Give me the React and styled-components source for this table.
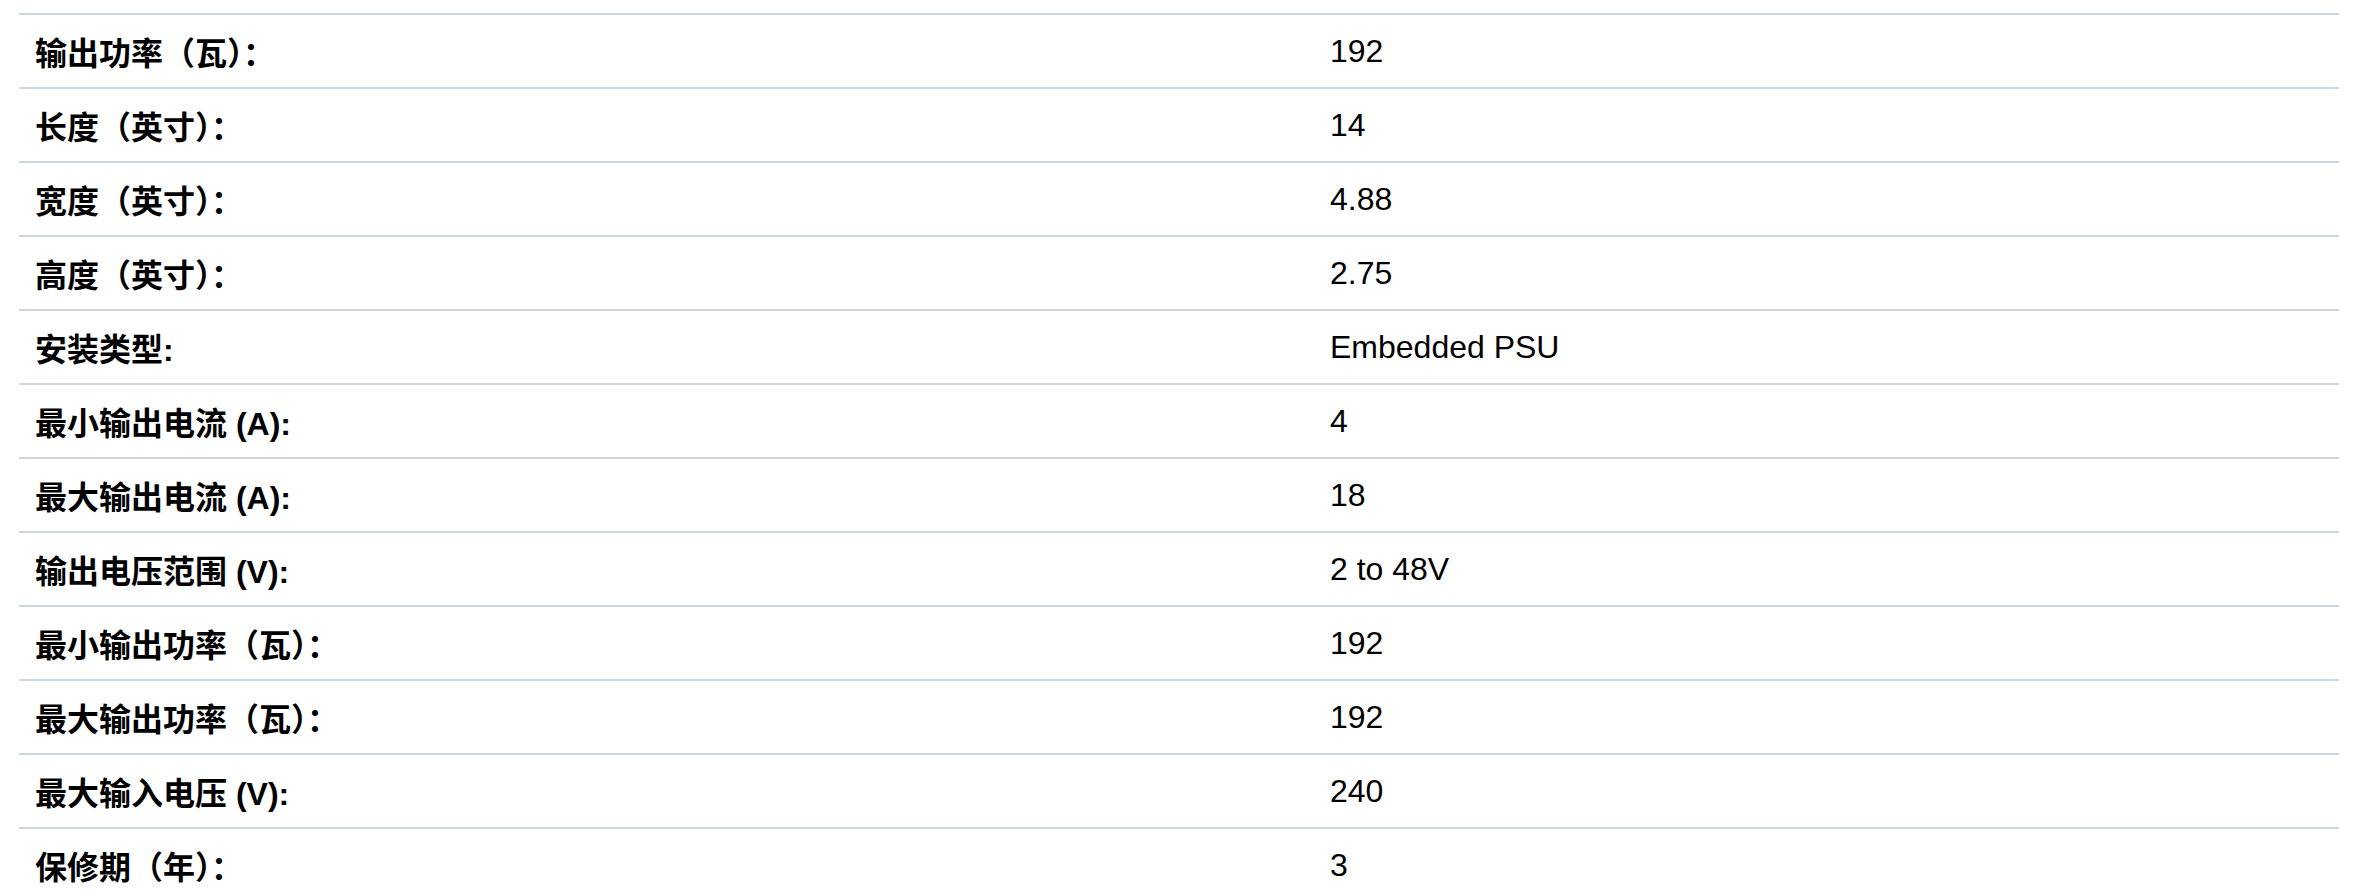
import React from 'react';
import styled, { createGlobalStyle } from 'styled-components';

const GlobalStyle = createGlobalStyle`
  body {
    margin: 0;
    background: #ffffff;
    font-family: "Liberation Sans", "Noto Sans CJK SC", sans-serif;
    color: #000;
  }
`;

const Page = styled.div`
  padding: 13px 34px 0 19px;
`;

const SpecTable = styled.div`
  display: flex;
  flex-direction: column;
`;

const Row = styled.div`
  display: grid;
  grid-template-columns: 1296px 1fr;
  border-top: 2px solid #cdd7e2;
  height: 72px;
  align-items: center;
`;

const Label = styled.div`
  padding-left: 16px;
  font-weight: bold;
  font-size: 32px;
  font-family: "Liberation Sans", "Noto Sans CJK SC", sans-serif;
  color: #000;
`;

const Value = styled.div`
  padding-left: 15px;
  font-size: 32px;
  color: #000;
`;

const specs = [
  ['输出功率（瓦）：', '192'],
  ['长度（英寸）：', '14'],
  ['宽度（英寸）：', '4.88'],
  ['高度（英寸）：', '2.75'],
  ['安装类型:', 'Embedded PSU'],
  ['最小输出电流 (A):', '4'],
  ['最大输出电流 (A):', '18'],
  ['输出电压范围 (V):', '2 to 48V'],
  ['最小输出功率（瓦）：', '192'],
  ['最大输出功率（瓦）：', '192'],
  ['最大输入电压 (V):', '240'],
  ['保修期（年）：', '3'],
];

const App = () => {
  return (
    <Page>
      <GlobalStyle />
      <SpecTable>
        {specs.map(([label, value]) => (
          <Row key={label}>
            <Label>{label}</Label>
            <Value>{value}</Value>
          </Row>
        ))}
      </SpecTable>
    </Page>
  );
};

export default App;
